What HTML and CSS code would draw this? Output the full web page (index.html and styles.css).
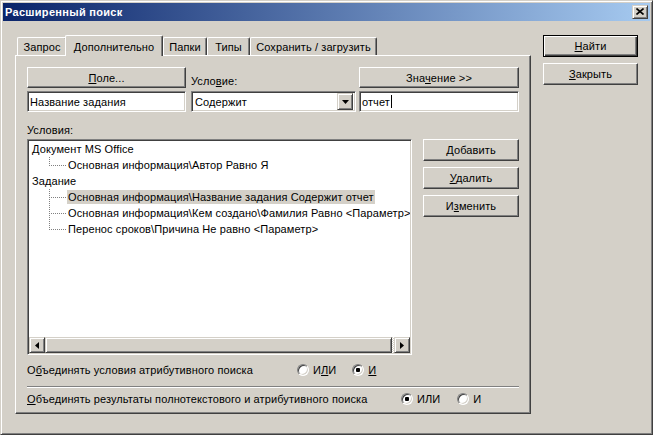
FILE: index.html
```html
<!DOCTYPE html>
<html lang="ru">
<head>
<meta charset="utf-8">
<title>Расширенный поиск</title>
<link rel="stylesheet" href="styles.css">
</head>
<body>
<div class="window">
  <div class="titlebar">
    <span class="title">Расширенный поиск</span>
    <span class="close-btn"><svg width="8" height="7" viewBox="0 0 8 7"><path d="M0.5 0.5 L7.5 6.5 M7.5 0.5 L0.5 6.5" stroke="#000" stroke-width="1.6" fill="none"/></svg></span>
  </div>
  <div class="client">
    <div class="main">
      <div class="tabs">
        <div class="tab t1">Запрос</div>
        <div class="tab t2 active">Дополнительно</div>
        <div class="tab t3">Папки</div>
        <div class="tab t4">Типы</div>
        <div class="tab t5">Сохранить / загрузить</div>
      </div>
      <div class="panel">
        <div class="fields">
          <div class="col c1">
            <div class="btn"><span><u>П</u>оле...</span></div>
            <div class="input">Название задания</div>
          </div>
          <div class="col c2">
            <div class="lbl cond-lbl">Усло<u>в</u>ие:</div>
            <div class="input combo"><span class="combo-text">Содержит</span><span class="drop"><svg width="7" height="4" viewBox="0 0 7 4"><path d="M0 0 H7 L3.5 4 Z" fill="#000"/></svg></span></div>
          </div>
          <div class="col c3">
            <div class="btn"><span>Зна<u>ч</u>ение &gt;&gt;</span></div>
            <div class="input"><span>отчет</span><span class="caret"></span></div>
          </div>
        </div>
        <div class="lbl conds-lbl">Условия:</div>
        <div class="conds">
          <div class="tree">
            <div class="tree-body">
              <div class="node">Документ MS Office</div>
              <div class="child last"><span class="conn"></span><span class="item">Основная информация\Автор Равно Я</span></div>
              <div class="node">Задание</div>
              <div class="child"><span class="conn"></span><span class="item selected">Основная информация\Название задания Содержит отчет</span></div>
              <div class="child"><span class="conn"></span><span class="item">Основная информация\Кем создано\Фамилия Равно &lt;Параметр&gt;</span></div>
              <div class="child last"><span class="conn"></span><span class="item">Перенос сроков\Причина Не равно &lt;Параметр&gt;</span></div>
            </div>
            <div class="hscroll">
              <span class="sb-btn"><svg width="4" height="7" viewBox="0 0 4 7"><path d="M4 0 V7 L0 3.5 Z" fill="#000"/></svg></span>
              <span class="thumb"></span>
              <span class="track"></span>
              <span class="sb-btn"><svg width="4" height="7" viewBox="0 0 4 7"><path d="M0 0 V7 L4 3.5 Z" fill="#000"/></svg></span>
            </div>
          </div>
          <div class="side-btns">
            <div class="btn side"><span><u>Д</u>обавить</span></div>
            <div class="btn side"><span><u>У</u>далить</span></div>
            <div class="btn side"><span>И<u>з</u>менить</span></div>
          </div>
        </div>
        <div class="opt-row row1">
          <span class="opt-lbl">О<u>б</u>ъединять условия атрибутивного поиска</span>
          <span class="radio-group">
            <span class="radio"><span class="circle"></span><span>И<u>Л</u>И</span></span>
            <span class="radio"><span class="circle on"></span><span><u>И</u></span></span>
          </span>
        </div>
        <div class="sep"></div>
        <div class="opt-row row2">
          <span class="opt-lbl"><u>О</u>бъединять результаты полнотекстового и атрибутивного поиска</span>
          <span class="radio-group">
            <span class="radio"><span class="circle on"></span><span>ИЛИ</span></span>
            <span class="radio"><span class="circle"></span><span>И</span></span>
          </span>
        </div>
      </div>
    </div>
    <div class="actions">
      <div class="btn default"><span><u>Н</u>айти</span></div>
      <div class="btn"><span><u>З</u>акрыть</span></div>
    </div>
  </div>
</div>
</body>
</html>
```
FILE: styles.css
```css
* { box-sizing: border-box; }
body {
  margin: 0;
  background: #d4d0c8;
  font-family: "Liberation Sans", Arial, sans-serif;
  font-size: 11px;
  letter-spacing: 0.1px;
  color: #000;
}
u { text-decoration: underline; text-underline-offset: 1px; }

.window {
  width: 653px;
  height: 435px;
  background: #d4d0c8;
  border: 1px solid;
  border-color: #d4d0c8 #404040 #404040 #d4d0c8;
  box-shadow: inset 1px 1px #fff, inset -1px -1px #808080;
  padding: 2px;
  display: flex;
  flex-direction: column;
}

.titlebar {
  height: 18px;
  flex: none;
  background: linear-gradient(to right, #0a246a, #a6caf0);
  display: flex;
  align-items: center;
  justify-content: space-between;
  padding: 0 2px;
}
.title {
  color: #fff;
  font-weight: bold;
  font-size: 11px;
  letter-spacing: 0.3px;
}
.close-btn {
  width: 16px;
  height: 14px;
  background: #d4d0c8;
  border: 1px solid;
  border-color: #d4d0c8 #404040 #404040 #d4d0c8;
  box-shadow: inset 1px 1px #fff, inset -1px -1px #808080;
  display: flex;
  align-items: center;
  justify-content: center;
  padding-bottom: 1px;
}

.client {
  flex: 1;
  display: flex;
  gap: 12px;
  padding: 14px 12px 0 12px;
}
.main { width: 516px; flex: none; }

.tabs {
  height: 20px;
  display: flex;
  align-items: flex-end;
  padding-left: 2px;
}
.tab {
  height: 18px;
  line-height: 16px;
  padding-top: 1px;
  text-align: center;
  white-space: nowrap;
  background: #d4d0c8;
  border-top: 1px solid #fff;
  border-left: 1px solid #fff;
  border-right: 1px solid #404040;
  border-radius: 2px 2px 0 0;
  box-shadow: inset -1px 0 #808080;
}
.t1 { width: 50px; }
.t2 { width: 98px; }
.t3 { width: 44px; }
.t4 { width: 43px; }
.t5 { width: 127px; }
.tab.active {
  height: 21px;
  margin-bottom: -1px;
  margin-left: -2px;
  padding-top: 3px;
  position: relative;
  z-index: 1;
}

.panel {
  height: 359px;
  border: 1px solid;
  border-color: #fff #404040 #404040 #fff;
  box-shadow: inset -1px -1px #808080;
  padding: 11px;
}

.btn {
  height: 21px;
  background: #d4d0c8;
  border: 1px solid;
  border-color: #fff #404040 #404040 #fff;
  box-shadow: inset -1px -1px #808080, inset 1px 1px #d4d0c8;
  display: flex;
  align-items: center;
  justify-content: center;
  white-space: nowrap;
}
.btn.default {
  border-color: #000;
  box-shadow: inset 1px 1px #fff, inset -1px -1px #404040, inset -2px -2px #808080;
}
.actions {
  width: 95px;
  flex: none;
  display: flex;
  flex-direction: column;
  gap: 6px;
}
.actions .btn { height: 22px; }

.fields { display: flex; }
.col { display: flex; flex-direction: column; gap: 3px; }
.c1 { width: 159px; }
.c2 { width: 165px; margin-left: 5px; }
.c3 { width: 160px; margin-left: 3px; }

.input {
  height: 21px;
  background: #fff;
  border: 1px solid;
  border-color: #808080 #fff #fff #808080;
  box-shadow: inset 1px 1px #404040, inset -1px -1px #d4d0c8;
  padding: 0 2px;
  display: flex;
  align-items: center;
  white-space: nowrap;
}
.combo { padding: 2px 2px 2px 3px; justify-content: space-between; }
.drop {
  width: 16px;
  height: 17px;
  background: #d4d0c8;
  border: 1px solid;
  border-color: #d4d0c8 #404040 #404040 #d4d0c8;
  box-shadow: inset 1px 1px #fff, inset -1px -1px #808080;
  display: flex;
  align-items: center;
  justify-content: center;
}
.caret {
  display: inline-block;
  width: 1px;
  height: 13px;
  background: #000;
  margin-left: 1px;
}

.lbl { line-height: 13px; }
.cond-lbl { height: 21px; padding-top: 8px; }
.conds-lbl { margin: 12px 0 2px; }

.conds { display: flex; gap: 11px; }
.tree {
  width: 385px;
  height: 216px;
  background: #fff;
  border: 1px solid;
  border-color: #808080 #fff #fff #808080;
  box-shadow: inset 1px 1px #404040, inset -1px -1px #d4d0c8;
  padding: 1px;
  display: flex;
  flex-direction: column;
}
.tree-body { flex: 1; overflow: hidden; }
.node {
  height: 16px;
  line-height: 16px;
  padding-left: 3px;
  white-space: nowrap;
}
.child {
  height: 16px;
  display: flex;
  align-items: center;
  padding-left: 20px;
  white-space: nowrap;
}
.conn {
  flex: none;
  width: 18px;
  height: 16px;
  background:
    repeating-linear-gradient(to right, #808080 0 1px, transparent 1px 2px) 2px 8px / 16px 1px no-repeat,
    repeating-linear-gradient(to bottom, #808080 0 1px, transparent 1px 2px) 0 0 / 1px 16px no-repeat;
}
.child.last .conn {
  background-size: 16px 1px, 1px 9px;
}
.item { line-height: 14px; padding: 0 1px; }
.item.selected { background: #d4d0c8; }

.hscroll { height: 16px; flex: none; display: flex; }
.sb-btn, .thumb {
  height: 16px;
  background: #d4d0c8;
  border: 1px solid;
  border-color: #d4d0c8 #404040 #404040 #d4d0c8;
  box-shadow: inset 1px 1px #fff, inset -1px -1px #808080;
}
.sb-btn {
  width: 16px;
  flex: none;
  display: flex;
  align-items: center;
  justify-content: center;
}
.thumb { flex: 1; }
.track {
  width: 2px;
  flex: none;
  background: repeating-conic-gradient(#fff 0 25%, #d4d0c8 0 50%) 0 0 / 2px 2px;
}

.side-btns {
  width: 96px;
  display: flex;
  flex-direction: column;
  gap: 6px;
}
.btn.side { height: 22px; }

.opt-row {
  height: 16px;
  display: flex;
  align-items: center;
  white-space: nowrap;
}
.row1 { margin-top: 7px; }
.row1 .opt-lbl { width: 270px; }
.row2 { margin-top: 3px; }
.row2 .opt-lbl { width: 374px; }
.radio-group { display: flex; }
.radio { display: flex; align-items: center; gap: 4px; }
.radio + .radio { margin-left: 16px; }
.row2 .radio + .radio { margin-left: 17px; }
.circle {
  width: 12px;
  height: 12px;
  border-radius: 50%;
  border: 1px solid;
  border-color: #808080 #fff #fff #808080;
  box-shadow: inset 1px 1px #404040, inset -1px -1px #d4d0c8;
  background: #fff;
}
.circle.on {
  background: radial-gradient(circle, #000 0 2px, #fff 2.5px);
}
.sep {
  margin-top: 8px;
  height: 2px;
  border-top: 1px solid #808080;
  border-bottom: 1px solid #fff;
}
```
